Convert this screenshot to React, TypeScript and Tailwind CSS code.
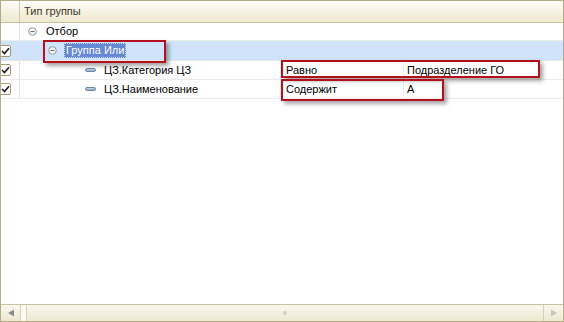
import React from "react";

const font = { fontFamily: '"Liberation Sans", Arial, sans-serif' };

function MinusCircle() {
  return (
    <svg width="9" height="9" viewBox="0 0 9 9" className="shrink-0">
      <circle cx="4.5" cy="4.5" r="3.8" fill="#f4f4f4" stroke="#9a9a9a" strokeWidth="1" />
      <line x1="2.5" y1="4.5" x2="6.5" y2="4.5" stroke="#6f6f6f" strokeWidth="1" />
    </svg>
  );
}

function Dash() {
  return <div className="h-[4px] w-[11px] shrink-0 rounded-[2px] border border-[#6d8aa3] bg-gradient-to-b from-[#c9d8e6] to-[#8fa9c0]" />;
}

function Check() {
  return (
    <div className="-ml-[2px] flex h-[12px] w-[12px] items-center justify-center rounded-[2px] border border-[#a59a72] bg-white">
      <svg width="9" height="8" viewBox="0 0 9 8">
        <path d="M1 4 L3.5 6.5 L8 1.2" fill="none" stroke="#1e1e1e" strokeWidth="1.6" />
      </svg>
    </div>
  );
}

function RedBox({ className }: { className: string }) {
  return <div className={"pointer-events-none absolute border-2 border-[#b3101c] shadow-[3px_3px_4px_rgba(0,0,0,0.35)] " + className} />;
}

export default function App() {
  return (
    <div style={font} className="relative flex h-[322px] w-[564px] flex-col overflow-hidden border border-[#b3ac86] bg-white text-[11px] text-black">
      {/* header */}
      <div className="flex h-[22px] shrink-0 border-b border-[#c9c2a0] bg-gradient-to-b from-[#fdfcf7] to-[#efe9cf]">
        <div className="w-[19px] shrink-0 border-r border-[#d2cbab]" />
        <div className="flex items-center pl-[4px] text-[#45372a]">Тип группы</div>
      </div>

      {/* rows */}
      <div className="flex flex-1 flex-col">
        <div className="flex h-[18px] border-b border-[#ebebeb]">
          <div className="w-[19px] shrink-0 border-r border-[#e2e2e2]" />
          <div className="flex items-center gap-[9px] pl-[8px]">
            <MinusCircle />
            <span>Отбор</span>
          </div>
        </div>

        <div className="flex h-[20px] border-b border-[#e6e6e6] bg-[#cfe3fa]">
          <div className="flex w-[19px] shrink-0 items-center border-r border-[#e2e2e2]">
            <Check />
          </div>
          <div className="flex items-center pl-[28px]">
            <MinusCircle />
            <span className="ml-[7px] border border-dotted border-[#ccd8f0] bg-[#6689d6] px-[1px] leading-[13px] text-white">Группа Или</span>
          </div>
        </div>

        {[
          { name: "ЦЗ.Категория ЦЗ", op: "Равно", val: "Подразделение ГО" },
          { name: "ЦЗ.Наименование", op: "Содержит", val: "А" },
        ].map((r) => (
          <div key={r.name} className="flex h-[19px] border-b border-[#ebebeb]">
            <div className="flex w-[19px] shrink-0 items-center border-r border-[#e2e2e2]">
              <Check />
            </div>
            <div className="flex w-[261px] shrink-0 items-center gap-[8px] border-r border-[#ececec] pl-[65px]">
              <Dash />
              <span>{r.name}</span>
            </div>
            <div className="flex w-[123px] shrink-0 items-center border-r border-[#ececec] pl-[5px]">{r.op}</div>
            <div className="flex items-center pl-[3px]">{r.val}</div>
          </div>
        ))}
      </div>

      {/* horizontal scrollbar */}
      <div className="flex h-[17px] shrink-0 border-t border-[#c9c2a0] bg-gradient-to-b from-[#f9f7ee] to-[#eee8d1]">
        <div className="flex w-[20px] items-center justify-center border-r border-[#d6cfb0]">
          <svg width="8" height="8" viewBox="0 0 8 8">
            <path d="M7 0.5 L7 7.5 L1 4 Z" fill="#8c8c8c" />
          </svg>
        </div>
        <div className="w-[6px] border-r border-[#d6cfb0] bg-[#fbfaf4]" />
        <div className="flex flex-1 items-center justify-center">
          <div className="h-[4px] w-[4px] rounded-full bg-[#d4d0c0]" />
        </div>
        <div className="flex w-[20px] items-center justify-center border-l border-[#d6cfb0]">
          <svg width="8" height="8" viewBox="0 0 8 8">
            <path d="M1 0.5 L1 7.5 L7 4 Z" fill="#c9c6b8" />
          </svg>
        </div>
      </div>

      <RedBox className="left-[42px] top-[39px] h-[23px] w-[123px]" />
      <RedBox className="left-[280px] top-[59px] h-[18px] w-[259px]" />
      <RedBox className="left-[280px] top-[78px] h-[22px] w-[163px]" />
    </div>
  );
}
